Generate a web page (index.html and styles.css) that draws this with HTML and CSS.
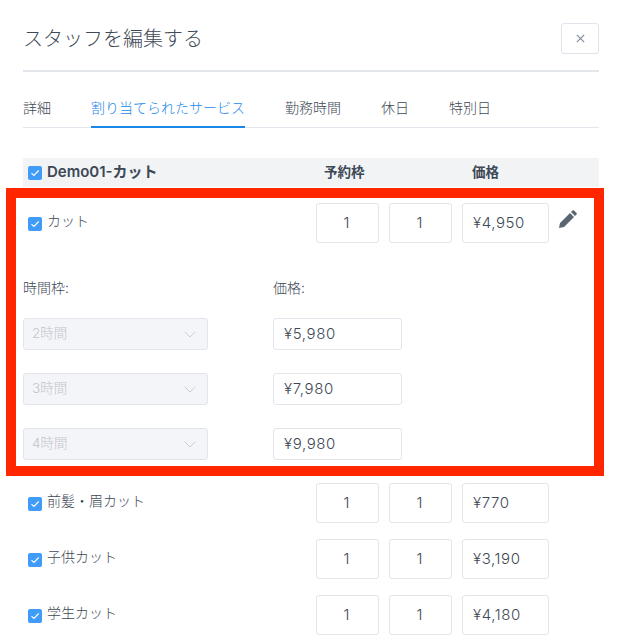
FILE: index.html
```html
<!DOCTYPE html>
<html lang="ja">
<head>
<meta charset="utf-8">
<title>スタッフを編集する</title>
<link rel="stylesheet" href="styles.css">
</head>
<body>
<div class="modal">
  <header class="modal-head">
    <h1 class="modal-title">スタッフを編集する</h1>
    <button class="close" type="button" aria-label="閉じる">
      <svg width="9" height="9" viewBox="0 0 9 9"><path d="M.8.8l7.400 7.400M8.200.8L.8 8.200" fill="none" stroke="#7d8a99" stroke-width="1.100"/></svg>
    </button>
  </header>
  <nav class="tabs">
    <a class="tab">詳細</a>
    <a class="tab active">割り当てられたサービス</a>
    <a class="tab">勤務時間</a>
    <a class="tab">休日</a>
    <a class="tab">特別日</a>
  </nav>
  <div class="table-head">
    <label class="check-label strong"><span class="check"><svg width="10" height="8" viewBox="0 0 10 8"><path d="M1.500 4.200l2.400 2.300 4.800-5" fill="none" stroke="#fff" stroke-width="1.100"/></svg></span><span class="label-text">Demo01-カット</span></label>
    <span class="col-slot">予約枠</span>
    <span class="col-price">価格</span>
  </div>

  <div class="row first">
    <label class="check-label"><span class="check"><svg width="10" height="8" viewBox="0 0 10 8"><path d="M1.500 4.200l2.400 2.300 4.800-5" fill="none" stroke="#fff" stroke-width="1.100"/></svg></span><span class="label-text">カット</span></label>
    <input class="field center" value="1">
    <input class="field center" value="1">
    <input class="field" value="¥4,950">
    <svg class="pencil" width="19" height="19" viewBox="0 0 19 19"><path d="M1 18l1-5L12 3l4 4L6 17zM13 2l1.600-1.500a1 1 0 0 1 1.400 0l2.500 2.500a1 1 0 0 1 0 1.400L17 6z" fill="#5a6572"/></svg>
  </div>

  <div class="variants">
    <div class="variant-labels">
      <span class="variant-col">時間枠:</span>
      <span>価格:</span>
    </div>
    <div class="variant">
      <div class="select-wrap">
        <select class="select" disabled><option>2時間</option></select>
        <svg class="chevron" width="12" height="7" viewBox="0 0 12 7"><path d="M.7.7L6 6l5.300-5.300" fill="none" stroke="#c9ced6"/></svg>
      </div>
      <input class="field small" value="¥5,980">
    </div>
    <div class="variant">
      <div class="select-wrap">
        <select class="select" disabled><option>3時間</option></select>
        <svg class="chevron" width="12" height="7" viewBox="0 0 12 7"><path d="M.7.7L6 6l5.300-5.300" fill="none" stroke="#c9ced6"/></svg>
      </div>
      <input class="field small" value="¥7,980">
    </div>
    <div class="variant">
      <div class="select-wrap">
        <select class="select" disabled><option>4時間</option></select>
        <svg class="chevron" width="12" height="7" viewBox="0 0 12 7"><path d="M.7.7L6 6l5.300-5.300" fill="none" stroke="#c9ced6"/></svg>
      </div>
      <input class="field small" value="¥9,980">
    </div>
  </div>

  <div class="row">
    <label class="check-label"><span class="check"><svg width="10" height="8" viewBox="0 0 10 8"><path d="M1.500 4.200l2.400 2.300 4.800-5" fill="none" stroke="#fff" stroke-width="1.100"/></svg></span><span class="label-text">前髪・眉カット</span></label>
    <input class="field center" value="1">
    <input class="field center" value="1">
    <input class="field" value="¥770">
  </div>
  <div class="row">
    <label class="check-label"><span class="check"><svg width="10" height="8" viewBox="0 0 10 8"><path d="M1.500 4.200l2.400 2.300 4.800-5" fill="none" stroke="#fff" stroke-width="1.100"/></svg></span><span class="label-text">子供カット</span></label>
    <input class="field center" value="1">
    <input class="field center" value="1">
    <input class="field" value="¥3,190">
  </div>
  <div class="row">
    <label class="check-label"><span class="check"><svg width="10" height="8" viewBox="0 0 10 8"><path d="M1.500 4.200l2.400 2.300 4.800-5" fill="none" stroke="#fff" stroke-width="1.100"/></svg></span><span class="label-text">学生カット</span></label>
    <input class="field center" value="1">
    <input class="field center" value="1">
    <input class="field" value="¥4,180">
  </div>
</div>
<div class="highlight"></div>
</body>
</html>
```
FILE: styles.css
```css
* { box-sizing: border-box; }
html, body { margin: 0; height: 100%; overflow: hidden; background: #fff; }
body {
  position: relative;
  font-family: Inter, "Noto Sans CJK JP", sans-serif;
  color: #3e4955;
}
.modal { width: 599px; padding-left: 23px; }
.modal-head {
  height: 72px;
  padding-top: 23px;
  display: flex;
  justify-content: space-between;
  align-items: flex-start;
  border-bottom: 2px solid #e3e6ea;
}
.modal-title {
  margin: 1px 0 0;
  font-size: 20px;
  line-height: 30px;
  font-weight: 300;
  color: #3e4955;
}
.close {
  width: 38px;
  height: 31px;
  padding: 0;
  background: #fff;
  border: 1px solid #e0e4ea;
  border-radius: 3px;
  display: flex;
  align-items: center;
  justify-content: center;
}
.tabs {
  height: 56px;
  display: flex;
  align-items: flex-end;
  border-bottom: 1px solid #e3e6ec;
}
.tab {
  font-size: 14px;
  font-weight: 300;
  line-height: 20px;
  height: 39px;
  padding-top: 9px;
  margin-right: 40px;
  margin-bottom: -1px;
  color: #3e4955;
}
.tab.active {
  color: #2589ea;
  border-bottom: 2px solid #1a86e8;
}
.table-head {
  margin-top: 30px;
  height: 29px;
  background: #f1f3f5;
  display: flex;
  align-items: center;
  padding-left: 5px;
  font-size: 13.500px;
  font-weight: 600;
  color: #3c4856;
}
.table-head .check-label { width: 296px; padding-top: 1px; }
.table-head .label-text { margin-top: -3px; }
.col-slot { width: 148px; margin-top: -3px; }
.col-price { margin-top: -3px; }
.check-label {
  display: flex;
  align-items: flex-start;
  font-size: 14px;
  font-weight: 300;
  line-height: 20px;
  color: #3e4955;
}
.check-label.strong {
  align-items: center;
  font-size: 15px;
  font-weight: 600;
  color: #3c4856;
}
.check {
  width: 14px;
  height: 14px;
  margin-right: 5px;
  border-radius: 2px;
  background: #419bf9;
  display: flex;
  align-items: center;
  justify-content: center;
  flex: none;
}
.row {
  margin-top: 16px;
  height: 40px;
  display: grid;
  grid-template-columns: 283px 63px 63px 87px 19px;
  column-gap: 10px;
  align-items: start;
}
.row.first { margin-top: 16px; }
.row .check-label { padding: 8px 0 0 5px; }
.row .check { margin-top: 6px; }
.field {
  height: 40px;
  width: 100%;
  border: 1px solid #e2e5ec;
  border-radius: 3px;
  padding: 0 10px 2px;
  font: 300 15px Inter, "Noto Sans CJK JP", sans-serif;
  letter-spacing: .6px;
  color: #3e4955;
  background: #fff;
  outline: none;
}
.field.center { text-align: center; letter-spacing: 0; padding-right: 12px; }
.field.small {
  width: 129px;
  height: 32px;
}
.pencil { margin: 7px 0 0 -1px; }
.variants { padding-top: 35px; }
.variant-labels {
  display: flex;
  font-size: 14px;
  font-weight: 300;
  line-height: 20px;
  color: #3e4955;
  margin-bottom: 20px;
}
.variant-col { width: 250px; }
.variant {
  display: flex;
  gap: 65px;
  margin-bottom: 23px;
}
.select-wrap { position: relative; width: 185px; height: 32px; }
.select {
  appearance: none;
  width: 100%;
  height: 100%;
  padding: 0 8px 2px;
  border: 1px solid #e2e5ec;
  border-radius: 3px;
  background: #f4f5f8;
  color: #bfc5cd;
  font: 300 13.500px Inter, "Noto Sans CJK JP", sans-serif;
  opacity: 1;
}
.chevron { position: absolute; right: 12px; top: 13px; }
.highlight {
  position: absolute;
  left: 6px;
  top: 188px;
  width: 598px;
  height: 288px;
  border: 10px solid #ff2600;
  pointer-events: none;
}
```
